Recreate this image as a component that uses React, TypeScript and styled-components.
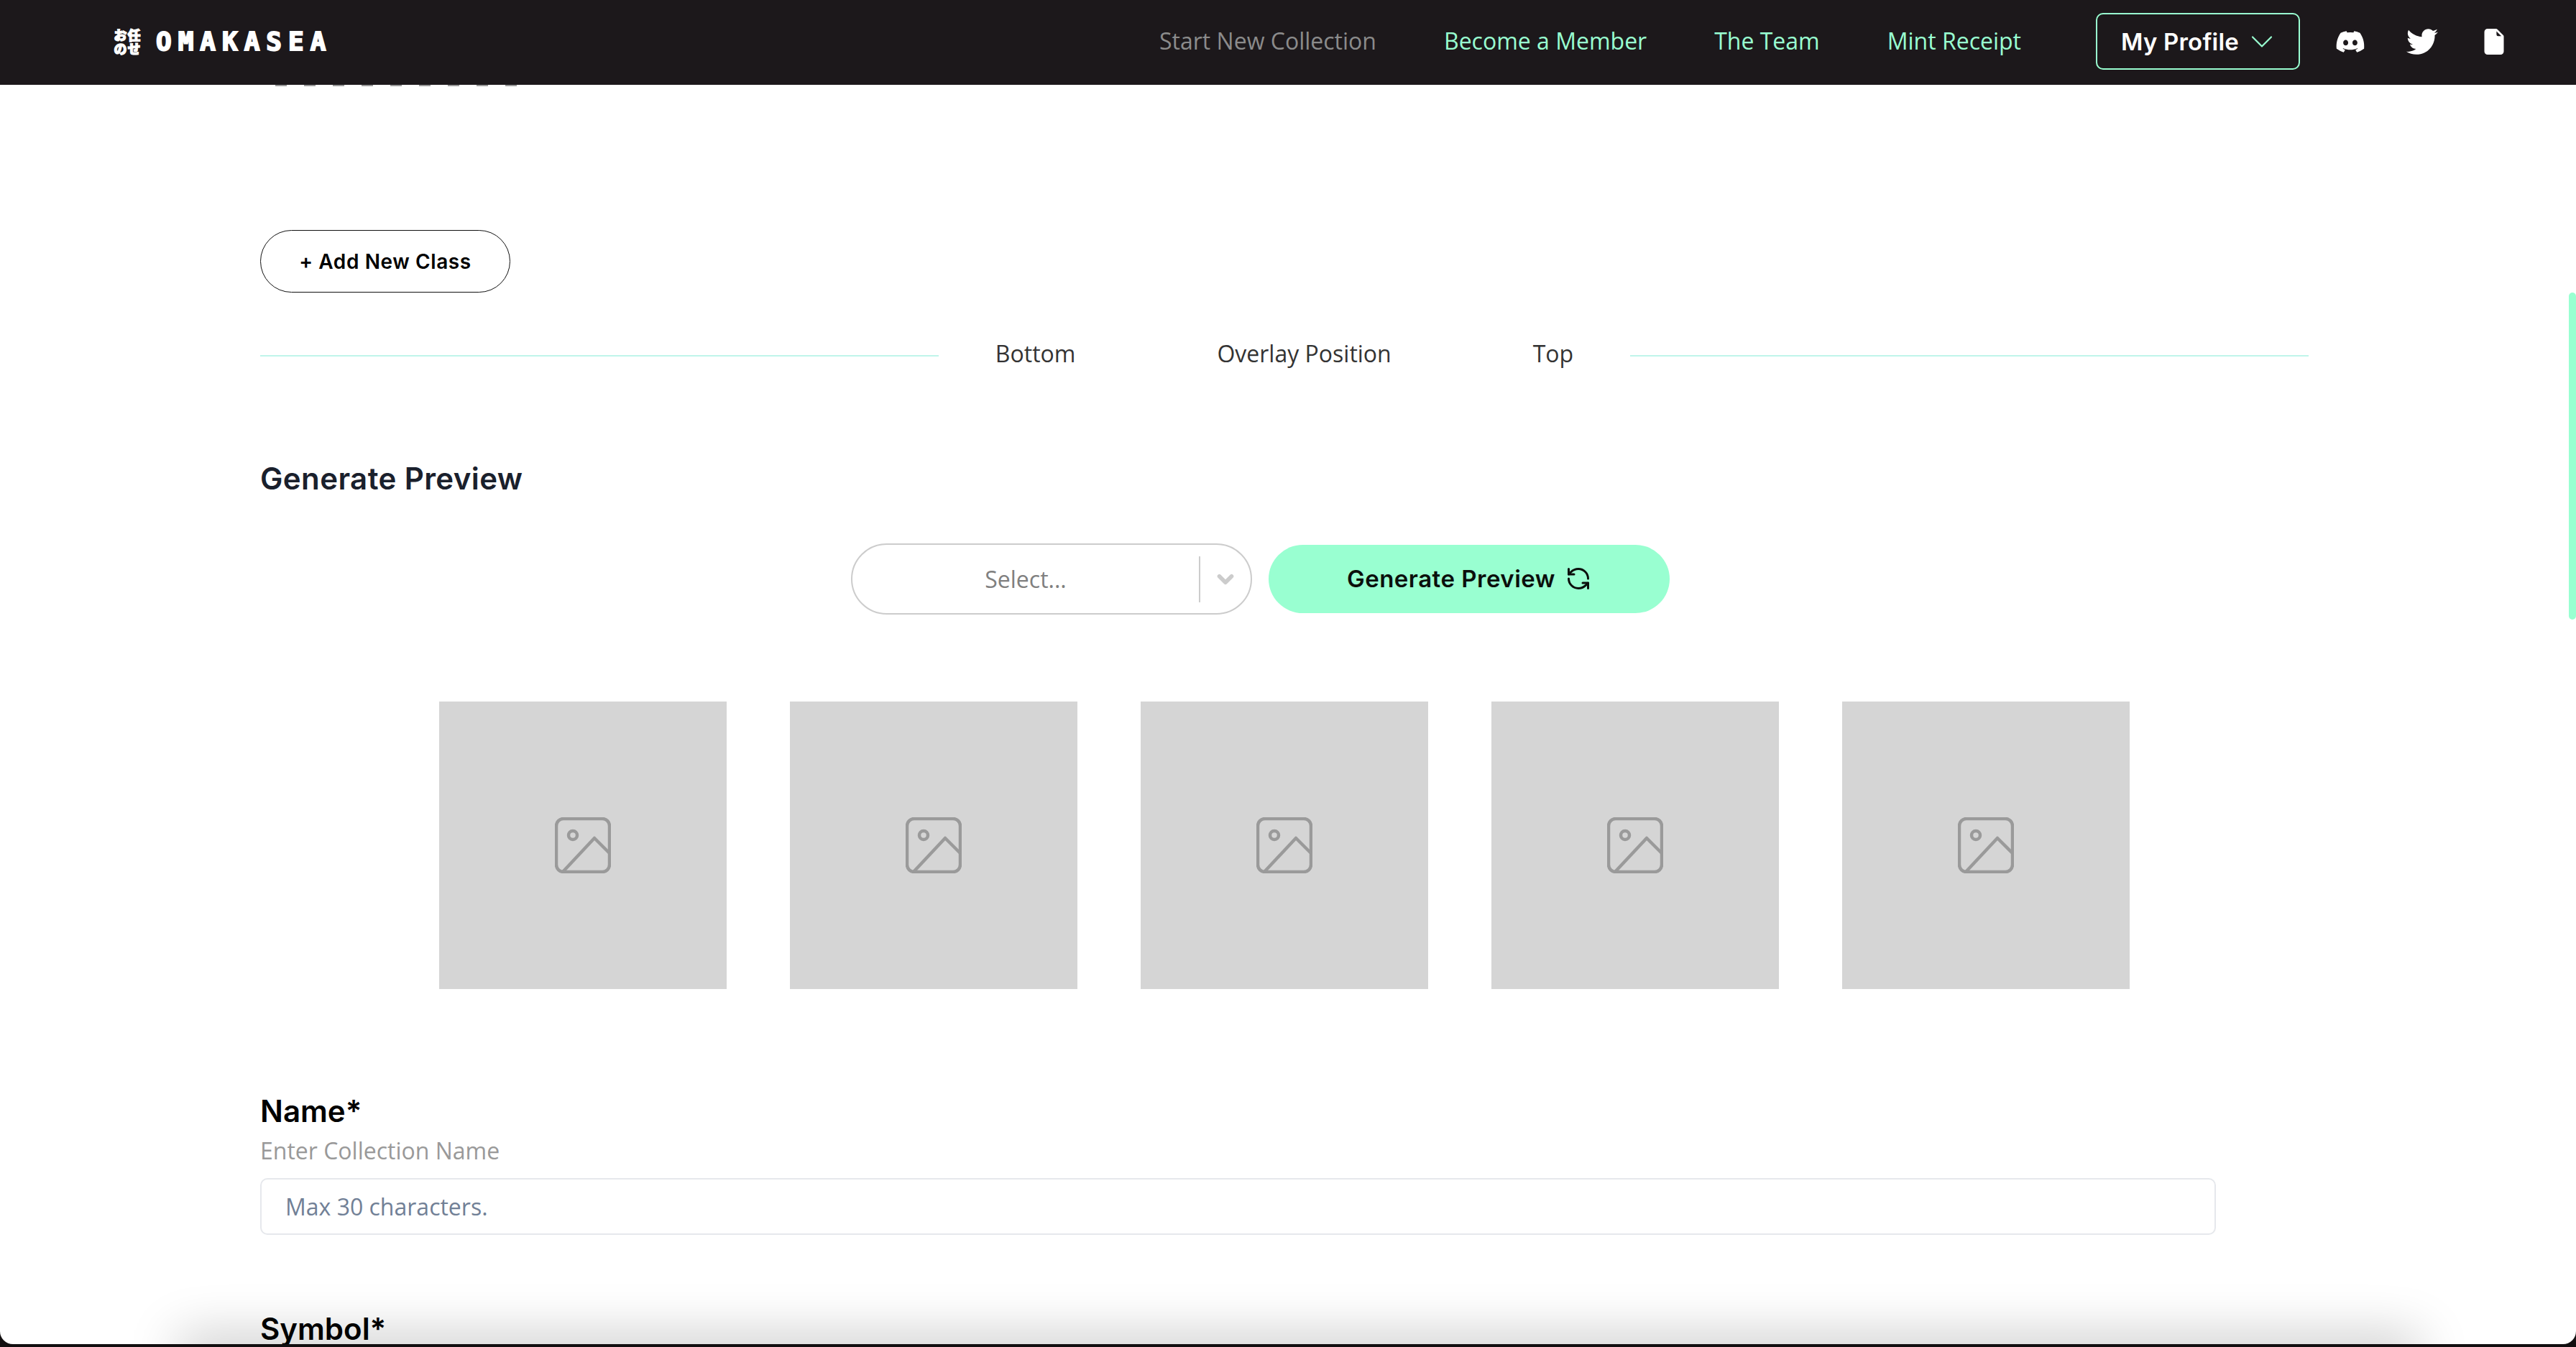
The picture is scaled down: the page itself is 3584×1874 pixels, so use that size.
import styled, { createGlobalStyle } from "styled-components";
import { ChevronDown, RefreshCcw } from "lucide-react";
import { FaDiscord, FaTwitter } from "react-icons/fa";
import { BsFileEarmarkFill } from "react-icons/bs";

const MINT = "#99ffd1";
const HEADING_FONT = `"Inter", "Liberation Sans", sans-serif`;
const BODY_FONT = `"Open Sans", "Liberation Sans", sans-serif`;

const GlobalStyle = createGlobalStyle`
  html, body {
    margin: 0;
    padding: 0;
    overflow: hidden;
    background: #120f10;
  }
  * {
    box-sizing: border-box;
  }
`;

const Screen = styled.div`
  width: 3584px;
  height: 1874px;
  background: #120f10;
`;

const Window = styled.div`
  position: relative;
  height: 1870px;
  overflow: hidden;
  display: flex;
  flex-direction: column;
  background: #fff;
  border-radius: 0 0 18px 18px;
  font-family: ${BODY_FONT};
`;

const Navbar = styled.header`
  flex: none;
  height: 118px;
  display: flex;
  align-items: center;
  padding: 0 64px 3px 158px;
  background: #1c181b;
`;

const Logo = styled.div`
  display: flex;
  align-items: center;
  gap: 21px;
  margin-right: auto;
  color: #fff;
`;

const LogoMark = styled.div`
  display: grid;
  grid-template-columns: 19px 19px;
  grid-auto-rows: 19px;
  font-family: "Noto Sans CJK JP", sans-serif;
  font-weight: 900;
  font-size: 18px;
  line-height: 19px;
  text-align: center;
  -webkit-text-stroke: 1.2px #fff;
`;

const LogoText = styled.span`
  font-family: "DejaVu Sans Mono", monospace;
  font-weight: 700;
  font-size: 36px;
  line-height: 1;
  letter-spacing: 9px;
  -webkit-text-stroke: 2px #fff;
`;

const NavLink = styled.a<{ $muted?: boolean }>`
  margin: 0 94px 2px 0;
  font-size: 32px;
  color: ${(p) => (p.$muted ? "#8b8b8b" : MINT)};
  white-space: nowrap;
`;

const ProfileButton = styled.button`
  width: 284px;
  height: 79px;
  margin: 0 20px 0 10px;
  padding: 0 0 0 33px;
  display: flex;
  align-items: center;
  gap: 6px;
  background: transparent;
  border: 2px solid ${MINT};
  border-radius: 10px;
  color: #fff;
  font-family: ${HEADING_FONT};
  font-weight: 600;
  font-size: 33px;
  letter-spacing: 0.2px;
  svg {
    color: ${MINT};
  }
`;

const IconLink = styled.a`
  width: 100px;
  display: flex;
  justify-content: center;
  color: #fff;
`;

const Content = styled.main`
  width: 3212px;
  padding-left: 362px;
`;

const ClippedRow = styled.div`
  display: flex;
  gap: 24px;
  padding-left: 21px;
`;

const ClippedMark = styled.span`
  width: 16px;
  height: 2px;
  background: #999;
`;

const OutlineButton = styled.button`
  display: block;
  width: 348px;
  height: 87px;
  margin-top: 200px;
  background: #fff;
  border: 1.5px solid #111;
  border-radius: 44px;
  color: #000;
  font-family: ${HEADING_FONT};
  font-weight: 600;
  font-size: 28px;
  letter-spacing: 0.6px;
`;

const SliderRow = styled.div`
  display: flex;
  align-items: center;
  height: 44px;
  margin-top: 62px;
  font-size: 32px;
  color: #333;
`;

const SliderLine = styled.span`
  flex: 1;
  height: 2px;
  margin-top: 8px;
  background: #bff5ea;
`;

const SliderLabels = styled.div`
  display: flex;
  gap: 197px;
  padding: 0 79px;
`;

const SectionTitle = styled.h2`
  margin: 128px 0 0;
  font-family: ${HEADING_FONT};
  font-weight: 600;
  font-size: 42px;
  letter-spacing: 0.4px;
  line-height: 50px;
  color: #1a202c;
`;

const GenerateRow = styled.div`
  display: flex;
  align-items: center;
  gap: 23px;
  margin: 65px 0 0 822px;
`;

const SelectBox = styled.div`
  position: relative;
  width: 558px;
  height: 99px;
  display: flex;
  align-items: center;
  border: 2.5px solid #cccccc;
  border-radius: 50px;
`;

const SelectValue = styled.span`
  width: 482px;
  text-align: center;
  font-size: 32px;
  color: #808080;
`;

const SelectSeparator = styled.span`
  width: 2px;
  height: 64px;
  background: #cccccc;
`;

const SelectArrow = styled.span`
  flex: 1;
  display: flex;
  justify-content: center;
  color: #cccccc;
`;

const GenerateButton = styled.button`
  width: 558px;
  height: 95px;
  padding-bottom: 2px;
  display: flex;
  align-items: center;
  justify-content: center;
  gap: 14px;
  background: ${MINT};
  border: none;
  border-radius: 48px;
  color: #0b0f0c;
  font-family: ${HEADING_FONT};
  font-weight: 600;
  font-size: 33px;
  letter-spacing: 0.5px;
`;

const PreviewRow = styled.div`
  display: flex;
  gap: 88px;
  margin: 121px 0 0 249px;
`;

const PreviewTile = styled.div`
  width: 400px;
  height: 400px;
  display: flex;
  align-items: center;
  justify-content: center;
  background: #d5d5d5;
`;

const FieldLabel = styled.label`
  display: block;
  font-family: ${HEADING_FONT};
  font-weight: 600;
  font-size: 42px;
  line-height: 50px;
  color: #000;
`;

const NameField = styled.div`
  margin-top: 145px;
`;

const FieldHint = styled.div`
  margin-top: 8px;
  font-size: 32px;
  line-height: 44px;
  color: #999;
`;

const TextInput = styled.div`
  width: 2721px;
  height: 79px;
  margin-top: 16px;
  padding-left: 33px;
  display: flex;
  align-items: center;
  border: 2px solid #e6e8ec;
  border-radius: 10px;
  font-size: 32px;
  color: #718096;
`;

const SymbolField = styled.div`
  margin-top: 106px;
`;

const ScrollThumb = styled.div`
  position: absolute;
  top: 407px;
  right: 0;
  width: 10px;
  height: 455px;
  border-radius: 5px;
  background: ${MINT};
`;

const BottomShade = styled.div`
  position: absolute;
  left: 260px;
  right: 230px;
  bottom: -30px;
  height: 30px;
  box-shadow: 0 0 70px 12px rgba(0, 0, 0, 0.22);
`;

const ImagePlaceholder = () => (
  <svg width="78" height="78" viewBox="0 0 78 78" fill="none" stroke="#9a9a9a" strokeWidth="4.5" strokeLinejoin="round">
    <rect x="2" y="2" width="74" height="74" rx="10" />
    <circle cx="25" cy="25" r="6" />
    <path d="M11 76 L55 29 L76 50" />
  </svg>
);

const App = () => {
  return (
    <Screen>
      <GlobalStyle />
      <Window>
        <Navbar>
          <Logo>
            <LogoMark>
              <span>お</span>
              <span>任</span>
              <span>の</span>
              <span>せ</span>
            </LogoMark>
            <LogoText>OMAKASEA</LogoText>
          </Logo>
          <NavLink $muted>Start New Collection</NavLink>
          <NavLink>Become a Member</NavLink>
          <NavLink>The Team</NavLink>
          <NavLink>Mint Receipt</NavLink>
          <ProfileButton>
            My Profile
            <ChevronDown size={52} strokeWidth={1} />
          </ProfileButton>
          <IconLink>
            <FaDiscord size={42} />
          </IconLink>
          <IconLink>
            <FaTwitter size={44} />
          </IconLink>
          <IconLink>
            <BsFileEarmarkFill size={36} />
          </IconLink>
        </Navbar>
        <Content>
          <ClippedRow>
            {Array.from({ length: 9 }).map((_, i) => (
              <ClippedMark key={i} />
            ))}
          </ClippedRow>
          <OutlineButton>+ Add New Class</OutlineButton>
          <SliderRow>
            <SliderLine />
            <SliderLabels>
              <span>Bottom</span>
              <span>Overlay Position</span>
              <span>Top</span>
            </SliderLabels>
            <SliderLine />
          </SliderRow>
          <SectionTitle>Generate Preview</SectionTitle>
          <GenerateRow>
            <SelectBox>
              <SelectValue>Select...</SelectValue>
              <SelectSeparator />
              <SelectArrow>
                <ChevronDown size={34} strokeWidth={4} />
              </SelectArrow>
            </SelectBox>
            <GenerateButton>
              Generate Preview
              <RefreshCcw size={36} strokeWidth={2} />
            </GenerateButton>
          </GenerateRow>
          <PreviewRow>
            {Array.from({ length: 5 }).map((_, i) => (
              <PreviewTile key={i}>
                <ImagePlaceholder />
              </PreviewTile>
            ))}
          </PreviewRow>
          <NameField>
            <FieldLabel>Name*</FieldLabel>
            <FieldHint>Enter Collection Name</FieldHint>
            <TextInput>Max 30 characters.</TextInput>
          </NameField>
          <SymbolField>
            <FieldLabel>Symbol*</FieldLabel>
          </SymbolField>
        </Content>
        <ScrollThumb />
        <BottomShade />
      </Window>
    </Screen>
  );
};

export default App;
